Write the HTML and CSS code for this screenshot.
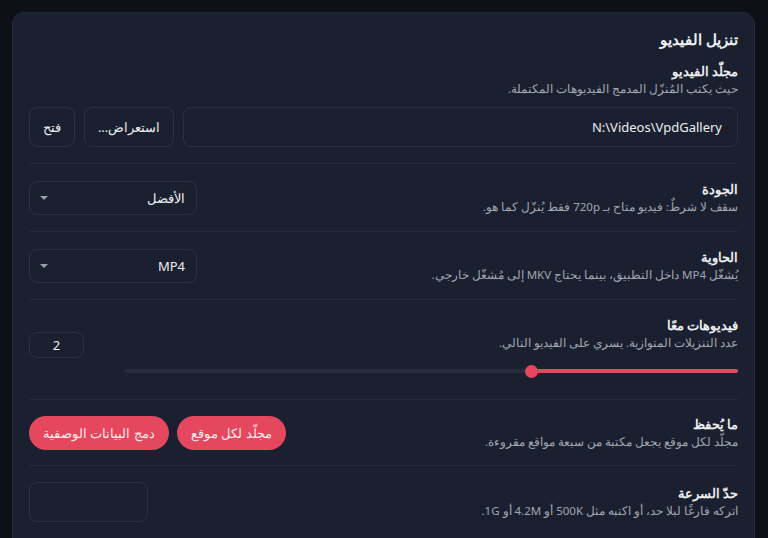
FILE: index.html
```html
<!DOCTYPE html>
<html lang="ar" dir="rtl">
<head>
<meta charset="utf-8">
<title>تنزيل الفيديو</title>
<link rel="stylesheet" href="styles.css">
</head>
<body>
<section class="card">
  <h2 class="card-title">تنزيل الفيديو</h2>

  <div class="row row-stack">
    <div class="info">
      <div class="label">مجلّد الفيديو</div>
      <div class="desc">حيث يكتب المُنزّل المدمج الفيديوهات المكتملة.</div>
    </div>
    <div class="path-row">
      <input class="field path" type="text" value="N:\Videos\VpdGallery" dir="ltr">
      <button class="btn">استعراض...</button>
      <button class="btn">فتح</button>
    </div>
  </div>

  <div class="row">
    <div class="info">
      <div class="label">الجودة</div>
      <div class="desc">سقف لا شرطٌ: فيديو متاح بـ 720p فقط يُنزّل كما هو.</div>
    </div>
    <div class="select"><span>الأفضل</span><span class="caret"></span></div>
  </div>

  <div class="row">
    <div class="info">
      <div class="label">الحاوية</div>
      <div class="desc">يُشغّل MP4 داخل التطبيق، بينما يحتاج MKV إلى مُشغّل خارجي.</div>
    </div>
    <div class="select"><span>MP4</span><span class="caret"></span></div>
  </div>

  <div class="row row-slider">
    <div class="info">
      <div class="label">فيديوهات معًا</div>
      <div class="desc">عدد التنزيلات المتوازية. يسري على الفيديو التالي.</div>
      <input class="range" type="range" min="1" max="4" value="2" style="--fill: 33.3%">
    </div>
    <input class="field num" type="text" value="2">
  </div>

  <div class="row row-tight">
    <div class="info">
      <div class="label">ما يُحفظ</div>
      <div class="desc">مجلّد لكل موقع يجعل مكتبة من سبعة مواقع مقروءة.</div>
    </div>
    <div class="pills">
      <button class="pill">مجلّد لكل موقع</button>
      <button class="pill">دمج البيانات الوصفية</button>
    </div>
  </div>

  <div class="row">
    <div class="info">
      <div class="label">حدّ السرعة</div>
      <div class="desc">اتركه فارغًا لبلا حد، أو اكتبه مثل 500K أو 4.2M أو 1G.</div>
    </div>
    <input class="field speed" type="text" value="">
  </div>
</section>
</body>
</html>
```

FILE: styles.css
```css
* { box-sizing: border-box; }

html, body {
  margin: 0;
  height: 100%;
  overflow: hidden;
}

body {
  background: #0d1017;
  font-family: "Noto Sans", sans-serif;
  color: #e9ebf0;
  padding: 12px 13px 0 12px;
}

.card {
  background: #1b2030;
  border: 1px solid #242a39;
  border-radius: 12px;
  padding: 13px 16px 0 16px;
  min-height: 600px;
}

.card-title {
  margin: 0 0 10px 0;
  font-size: 14.5px;
  font-weight: 700;
  line-height: 26px;
  color: #eef0f4;
}

.row {
  display: flex;
  align-items: center;
  justify-content: space-between;
  gap: 24px;
  padding: 16px 0 15px;
  border-top: 1px solid #242a3a;
}

.row-stack {
  display: block;
  border-top: none;
  padding: 0 0 16px 0;
}

.row-slider { gap: 40px; padding: 16px 0 26px; }

.row-tight { padding: 15px 0 14px; }

.info { flex: 1; min-width: 0; }

.label {
  font-size: 13px;
  font-weight: 700;
  line-height: 18px;
  color: #eceef2;
}

.desc {
  font-size: 11.5px;
  line-height: 18px;
  color: #a0a6b2;
}

.path-row {
  display: flex;
  gap: 9px;
  margin-top: 9px;
}

.field {
  background: #1b2030;
  border: 1px solid #2a3041;
  border-radius: 8px;
  color: #eceef2;
  font-family: inherit;
  font-size: 13px;
  outline: none;
}

.path {
  flex: 1;
  height: 40px;
  padding: 0 15px;
  text-align: right;
}

.btn {
  height: 40px;
  padding: 0 13px;
  background: #1b2030;
  border: 1px solid #2a3041;
  border-radius: 8px;
  color: #eceef2;
  font-family: inherit;
  font-size: 12.5px;
}

.select {
  width: 168px;
  height: 34px;
  display: flex;
  align-items: center;
  justify-content: space-between;
  padding: 0 11px 0 10px;
  border: 1px solid #2a3041;
  border-radius: 8px;
  font-size: 13px;
  color: #eceef2;
}

.caret {
  width: 0;
  height: 0;
  border-left: 4px solid transparent;
  border-right: 4px solid transparent;
  border-top: 4px solid #9aa1ad;
}

.num {
  width: 55px;
  height: 26px;
  text-align: center;
  padding: 0;
}

.range {
  -webkit-appearance: none;
  appearance: none;
  display: block;
  width: 100%;
  height: 4px;
  margin: 17px 0 0 0;
  border-radius: 2px;
  background: linear-gradient(to left, #e5475f var(--fill), #262c3b var(--fill));
}

.range::-webkit-slider-thumb {
  -webkit-appearance: none;
  width: 13px;
  height: 13px;
  border-radius: 50%;
  background: #e5475f;
  border: none;
}

.pills { display: flex; gap: 8px; }

.pill {
  height: 34px;
  padding: 0 14px;
  border: none;
  border-radius: 17px;
  background: #e5475f;
  color: #fdebee;
  font-family: inherit;
  font-size: 13px;
}

.speed {
  width: 119px;
  height: 40px;
}
```
